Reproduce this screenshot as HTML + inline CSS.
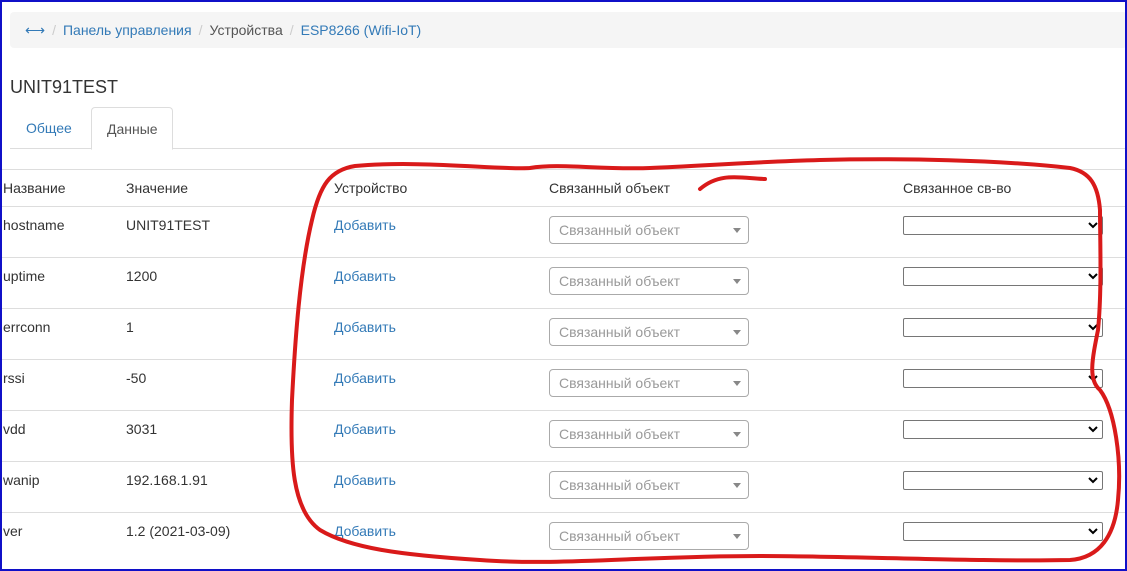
<!DOCTYPE html>
<html><head><meta charset="utf-8"><style>
*{box-sizing:border-box;margin:0;padding:0}
body{width:1127px;height:571px;overflow:hidden;background:#fff;font-family:"Liberation Sans",sans-serif;font-size:14px;color:#333;position:relative}
.frame{position:absolute;inset:0;border:2px solid #1010c8;pointer-events:none;z-index:5}
.bc{position:absolute;left:10px;top:12px;width:1117px;height:36px;background:#f5f5f5;border-radius:4px;padding:0 15px;line-height:36px}
.bc a{color:#337ab7}
.bc .s{color:#ccc;padding:0 7px}
h3{position:absolute;left:10px;top:77px;font-size:18px;font-weight:normal}
.tabs{position:absolute;left:10px;top:107px;width:1117px;height:42px;border-bottom:1px solid #ddd}
.tab{position:absolute;top:0;height:42px;line-height:42px;padding:0 15px;color:#337ab7}
.tab.a{left:81px;width:82px;border:1px solid #ddd;border-bottom-color:#fff;border-radius:4px 4px 0 0;color:#555;background:#fff;height:43px}
.row{position:absolute;left:0;width:1127px;height:51px;border-top:1px solid #ddd}
.row span{position:absolute;top:0;line-height:36px}
.s2{position:absolute;left:549px;top:9px;width:200px;height:28px;border:1px solid #aaa;border-radius:4px;color:#999;padding-left:9px;line-height:27px}
.s2:after{content:"";position:absolute;right:7px;top:11px;border:4px solid transparent;border-top:5px solid #888}
.ns{position:absolute;left:903px;top:9px;width:200px;height:19px;border:1px solid #767676;border-radius:2px}
.ns svg{position:absolute;right:4px;top:4px}
a{text-decoration:none;color:#337ab7}
</style></head><body>
<div class="frame"></div>
<div class="bc"><a>⟷</a><span class="s">/</span><a>Панель управления</a><span class="s">/</span><span style="color:#555">Устройства</span><span class="s">/</span><a>ESP8266 (Wifi-IoT)</a></div>
<h3>UNIT91TEST</h3>
<div class="tabs"><div class="tab" style="left:1px">Общее</div><div class="tab a">Данные</div></div>
<div class="row h" style="top:169px"><span style="left:3px">Название</span><span style="left:126px">Значение</span><span style="left:334px">Устройство</span><span style="left:549px">Связанный объект</span><span style="left:903px">Связанное св-во</span></div>
<div id="rows"></div>
<script>
var d=[["hostname","UNIT91TEST"],["uptime","1200"],["errconn","1"],["rssi","-50"],["vdd","3031"],["wanip","192.168.1.91"],["ver","1.2 (2021-03-09)"]],h="";
d.forEach(function(r,i){h+='<div class="row" style="top:'+(206+i*51)+'px"><span style="left:3px">'+r[0]+'</span><span style="left:126px">'+r[1]+'</span><span style="left:334px"><a>Добавить</a></span><div class="s2">Связанный объект</div><div class="ns"><svg width="10" height="8" viewBox="0 0 10 8"><path d="M1 2l4 4 4-4" stroke="#000" stroke-width="2" fill="none"/></svg></div></div>';});
document.getElementById("rows").outerHTML=h;
</script>
<svg style="position:absolute;left:0;top:0;z-index:4" width="1127" height="571"><g fill="none" stroke="#d91a1a" stroke-width="4" stroke-linecap="round">
<path d="M700 189C720 172 740 178 765 179M530 168C500 170 420 160 355 166C330 170 320 185 312 220C300 270 295 340 292 400C290 460 292 510 320 530C350 548 400 555 480 560C560 566 640 556 760 556C850 556 980 562 1070 560C1100 558 1115 535 1118 500C1122 460 1115 410 1100 390C1088 380 1092 360 1098 330C1102 290 1100 240 1100 210C1098 185 1090 172 1070 168C1000 160 900 158 820 160C750 162 700 166 650 168C600 170 560 163 530 168"/>
</g></svg>
</body></html>
